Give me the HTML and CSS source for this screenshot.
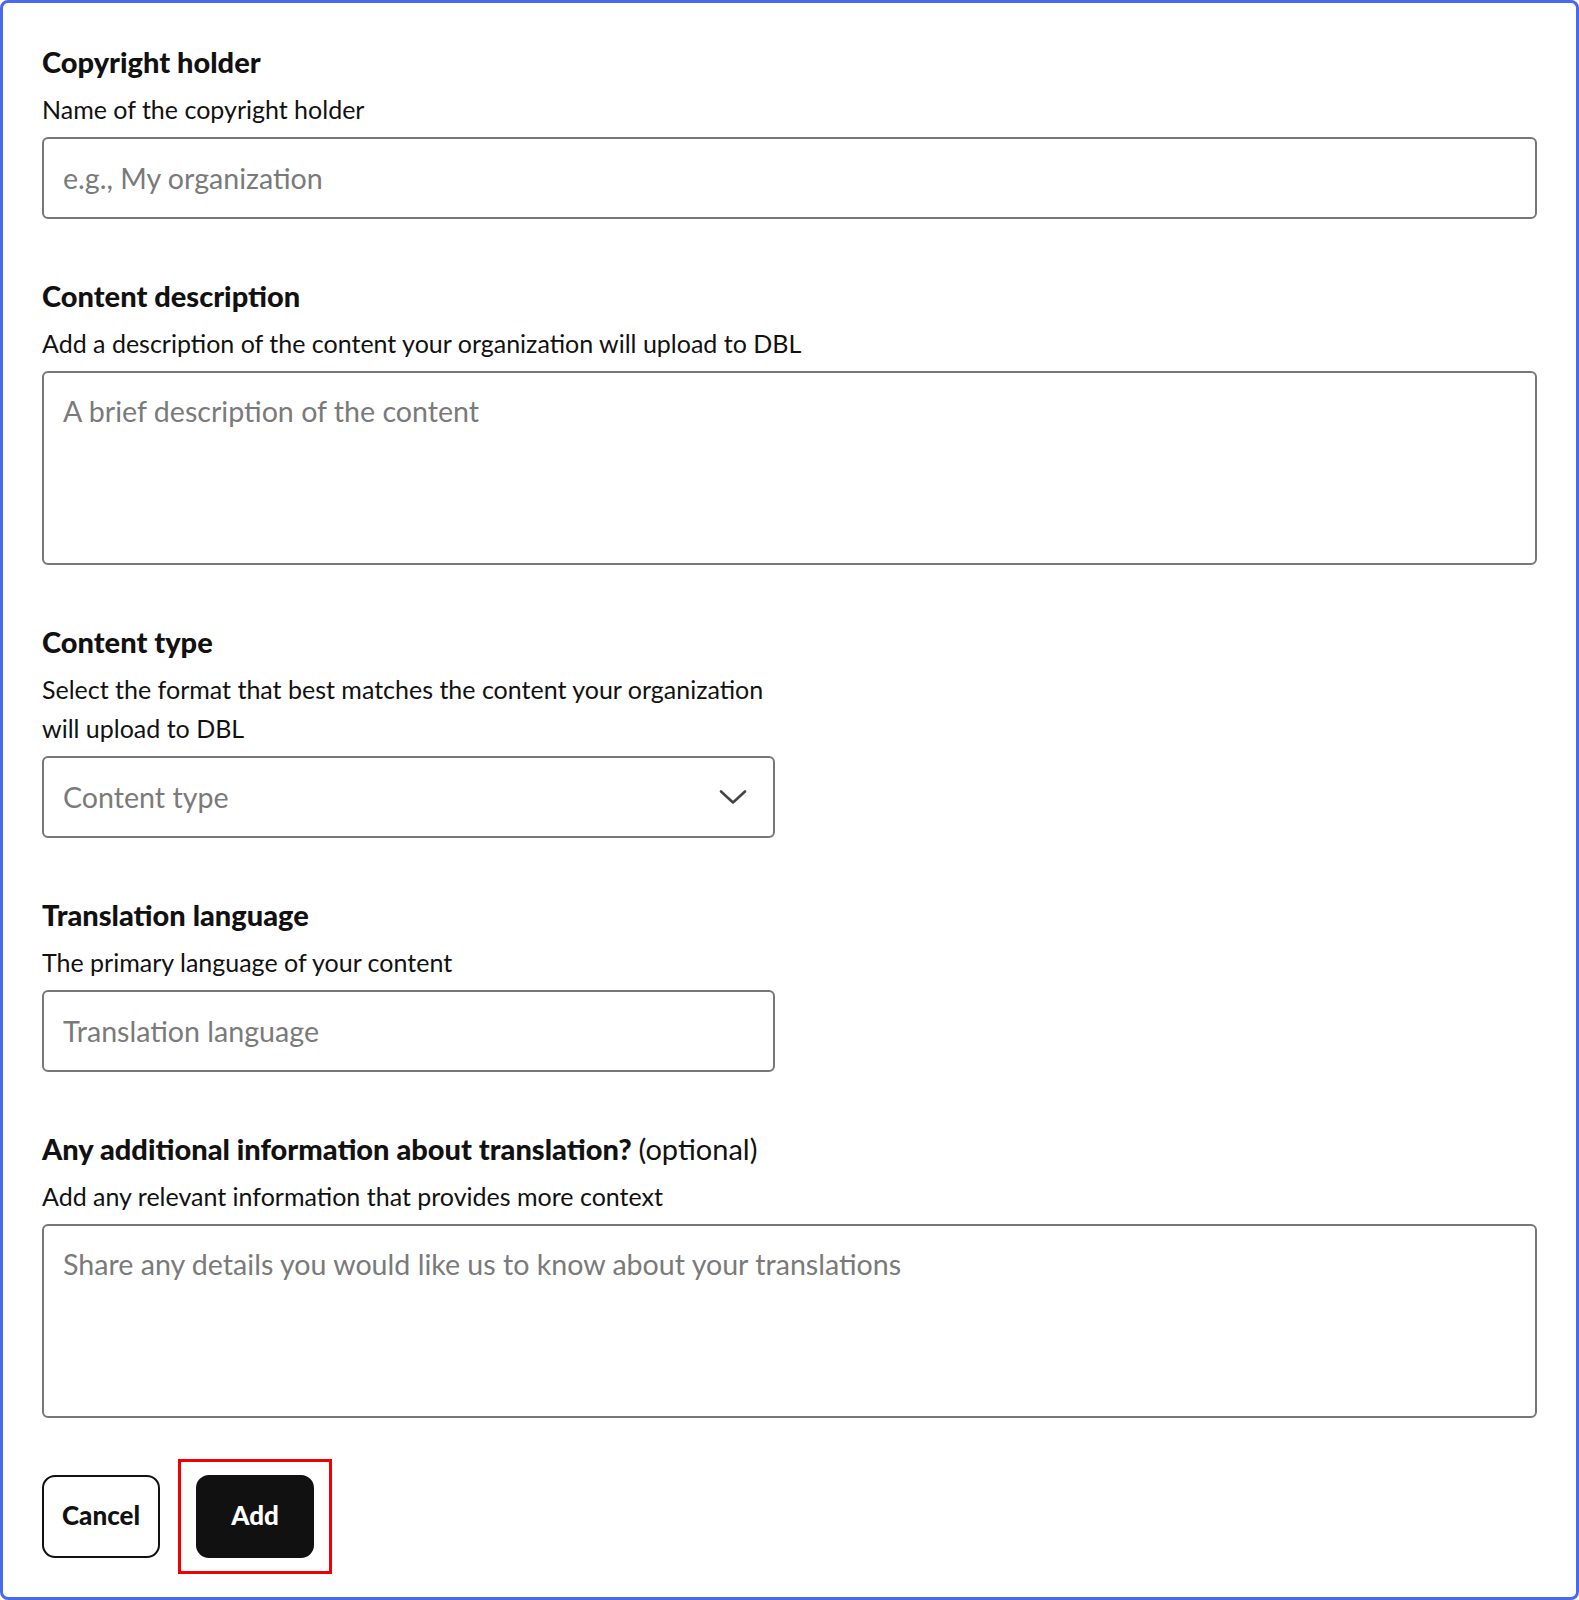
FILE: index.html
```html
<!DOCTYPE html>
<html lang="en">

<head>
    <meta charset="UTF-8">
    <meta name="viewport" content="width=device-width, initial-scale=1.0">
    <title>Add Content</title>
    <link rel="stylesheet" href="styles.css">
</head>

<body>

    <div class="form-card">

        <!-- Copyright holder -->
        <div class="field">
            <label class="field-title" for="copyrightHolder">Copyright holder</label>
            <p class="field-help">Name of the copyright holder</p>
            <input type="text" id="copyrightHolder" class="text-input" placeholder="e.g., My organization">
        </div>

        <!-- Content description -->
        <div class="field">
            <label class="field-title" for="contentDescription">Content description</label>
            <p class="field-help">Add a description of the content your organization will upload to DBL</p>
            <textarea id="contentDescription" class="text-input text-area" placeholder="A brief description of the content"></textarea>
        </div>

        <!-- Content type -->
        <div class="field field-half">
            <label class="field-title" for="contentType">Content type</label>
            <p class="field-help">Select the format that best matches the content your organization will upload to DBL</p>
            <div class="select-wrap">
                <select id="contentType" class="text-input select-input">
                    <option value="" selected disabled>Content type</option>
                    <option value="text">Text</option>
                    <option value="audio">Audio</option>
                    <option value="video">Video</option>
                    <option value="print">Print</option>
                </select>
                <svg class="select-chevron" width="28" height="16" viewBox="0 0 28 16" fill="none">
                    <path d="M2 2.5 L14 13.5 L26 2.5" stroke="#444" stroke-width="2.6" stroke-linecap="round" stroke-linejoin="round" />
                </svg>
            </div>
        </div>

        <!-- Translation language -->
        <div class="field field-half">
            <label class="field-title" for="translationLanguage">Translation language</label>
            <p class="field-help">The primary language of your content</p>
            <input type="text" id="translationLanguage" class="text-input" placeholder="Translation language">
        </div>

        <!-- Additional info -->
        <div class="field">
            <label class="field-title" for="additionalInfo">Any additional information about translation? <span class="optional">(optional)</span></label>
            <p class="field-help">Add any relevant information that provides more context</p>
            <textarea id="additionalInfo" class="text-input text-area" placeholder="Share any details you would like us to know about your translations"></textarea>
        </div>

        <!-- Actions -->
        <div class="actions">
            <button type="button" class="btn btn-outline">Cancel</button>
            <span class="highlight">
                <button type="button" class="btn btn-dark">Add</button>
            </span>
        </div>

    </div>

</body>

</html>
```

FILE: styles.css
```css
body {
    margin: 0;
    font-family: Lato, "Liberation Sans", Arial, sans-serif;
    background-color: #ffffff;
    color: #111;
}

/* Outer card */
.form-card {
    box-sizing: border-box;
    min-height: 100vh;
    border: 3px solid #4a67f0;
    border-radius: 8px;
    padding: 41px 39px 20px;
}

.field + .field {
    margin-top: 59px;
}

.field-half {
    width: 733px;
}

.field-title {
    display: block;
    font-size: 29px;
    font-weight: 900;
    line-height: 36px;
    margin-bottom: 10px;
}

.optional {
    font-weight: 400;
}

.field-help {
    font-size: 25px;
    line-height: 39px;
    margin: 0 0 8px;
}

/* Inputs */
.text-input {
    display: block;
    box-sizing: border-box;
    width: 100%;
    height: 82px;
    padding: 0 19px;
    font-family: inherit;
    font-size: 28.6px;
    color: #111;
    background-color: #fff;
    border: 2px solid #777;
    border-radius: 6px;
    outline: none;
}

.text-input::placeholder {
    color: #7a7a7a;
}

.text-area {
    height: 194px;
    padding: 20px 19px;
    line-height: 36px;
    resize: none;
}

.select-wrap {
    position: relative;
}

.select-input {
    appearance: none;
    -webkit-appearance: none;
    color: #7a7a7a;
    cursor: pointer;
}

.select-chevron {
    position: absolute;
    right: 28px;
    top: 33px;
    pointer-events: none;
}

/* Buttons */
.actions {
    display: flex;
    align-items: center;
    gap: 18px;
    margin-top: 41px;
}

.highlight {
    display: inline-flex;
    padding: 13px 15px;
    border: 3px solid #f00000;
}

.btn {
    box-sizing: border-box;
    width: 118px;
    height: 83px;
    padding: 0 0 4px;
    font-family: inherit;
    font-size: 26px;
    font-weight: 900;
    border-radius: 13px;
    cursor: pointer;
}

.btn-outline {
    background-color: #fff;
    color: #111;
    border: 2px solid #111;
}

.btn-dark {
    background-color: #111;
    color: #fff;
    border: 2px solid #111;
}
```
